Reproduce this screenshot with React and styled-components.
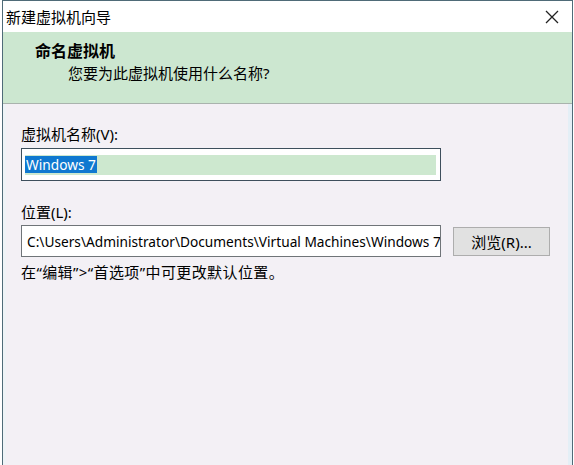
import styled, { createGlobalStyle } from 'styled-components'

const GlobalStyle = createGlobalStyle`
  html, body {
    margin: 0;
    padding: 0;
    background: #ffffff;
  }
  body {
    font-family: "Noto Sans", "Noto Sans CJK SC", sans-serif;
    color: #000;
  }
`

const Frame = styled.div`
  width: 574px;
  height: 465px;
  padding: 0 1px 0 2px;
  box-sizing: border-box;
  overflow: hidden;
`

const Window = styled.div`
  height: 100%;
  border: 1px solid #4f6b78;
  border-bottom: none;
  display: flex;
  flex-direction: column;
  background: #f3f0f5;
  box-shadow: inset -4px 0 0 #e4eff6, inset 3px 0 0 #eef3f6;
`

const TitleBar = styled.div`
  height: 31px;
  display: flex;
  align-items: center;
  justify-content: space-between;
  padding: 0 12px 0 3px;
  background: #ffffff;
  font-size: 15px;
`

const CloseButton = styled.button`
  border: none;
  background: none;
  padding: 0;
  width: 16px;
  height: 16px;
  display: flex;
  align-items: center;
  justify-content: center;
`

const Header = styled.div`
  height: 72px;
  box-sizing: border-box;
  background: #cce7d0;
  border-bottom: 1px solid #a9b3ad;
  padding: 8px 0 0 32px;
`

const Heading = styled.div`
  font-size: 16px;
  font-weight: bold;
  line-height: 22px;
`

const SubHeading = styled.div`
  font-size: 15px;
  line-height: 22px;
  padding-left: 33px;
`

const Body = styled.div`
  flex: 1;
  padding: 20px 0 0 18px;
  display: flex;
  flex-direction: column;
`

const Label = styled.div`
  font-size: 15px;
  line-height: 20px;
  margin-top: ${p => p.$top || 0}px;
  margin-bottom: ${p => p.$gap}px;
`

const Field = styled.div`
  width: 420px;
  height: ${p => p.$h}px;
  box-sizing: border-box;
  border: 1px solid ${p => p.$focus ? '#3d4f5c' : '#6f7478'};
  background: #ffffff;
  display: flex;
  align-items: center;
  padding: 0 3px;
  font-size: 13.7px;
  white-space: nowrap;
  overflow: hidden;
`

const Fill = styled.div`
  flex: 1;
  height: 20px;
  margin-right: 1px;
  background: #cde8cf;
  display: flex;
  align-items: center;
`

const Selected = styled.span`
  background: #0f78d0;
  color: #ffffff;
  line-height: 17px;
  padding: 0 1px;
`

const PathText = styled.span`
  padding-left: 2px;
`

const Row = styled.div`
  display: flex;
  align-items: center;
  gap: 12px;
`

const Browse = styled.button`
  width: 97px;
  height: 29px;
  background: #e1e1e1;
  border: 1px solid #adadad;
  font-family: "Noto Sans", "Noto Sans CJK SC", sans-serif;
  font-size: 15px;
  color: #000;
  padding: 0;
`

const Hint = styled.div`
  font-size: 15px;
  line-height: 20px;
  margin-top: 5px;
  letter-spacing: 0.4px;
`

export default function App() {
  return (
    <Frame>
      <GlobalStyle />
      <Window>
        <TitleBar>
          <span>新建虚拟机向导</span>
          <CloseButton>
            <svg width="14" height="14" viewBox="0 0 14 14">
              <path d="M1 1L13 13M13 1L1 13" stroke="#222" strokeWidth="1.3" fill="none" />
            </svg>
          </CloseButton>
        </TitleBar>
        <Header>
          <Heading>命名虚拟机</Heading>
          <SubHeading>您要为此虚拟机使用什么名称?</SubHeading>
        </Header>
        <Body>
          <Label $gap={4}>虚拟机名称(V):</Label>
          <Field $h={33} $focus>
            <Fill>
              <Selected>Windows 7</Selected>
            </Fill>
          </Field>
          <Label $gap={3} $top={21}>位置(L):</Label>
          <Row>
            <Field $h={32}>
              <PathText>C:\Users\Administrator\Documents\Virtual Machines\Windows 7</PathText>
            </Field>
            <Browse>浏览(R)...</Browse>
          </Row>
          <Hint>在“编辑”&gt;“首选项”中可更改默认位置。</Hint>
        </Body>
      </Window>
    </Frame>
  )
}
